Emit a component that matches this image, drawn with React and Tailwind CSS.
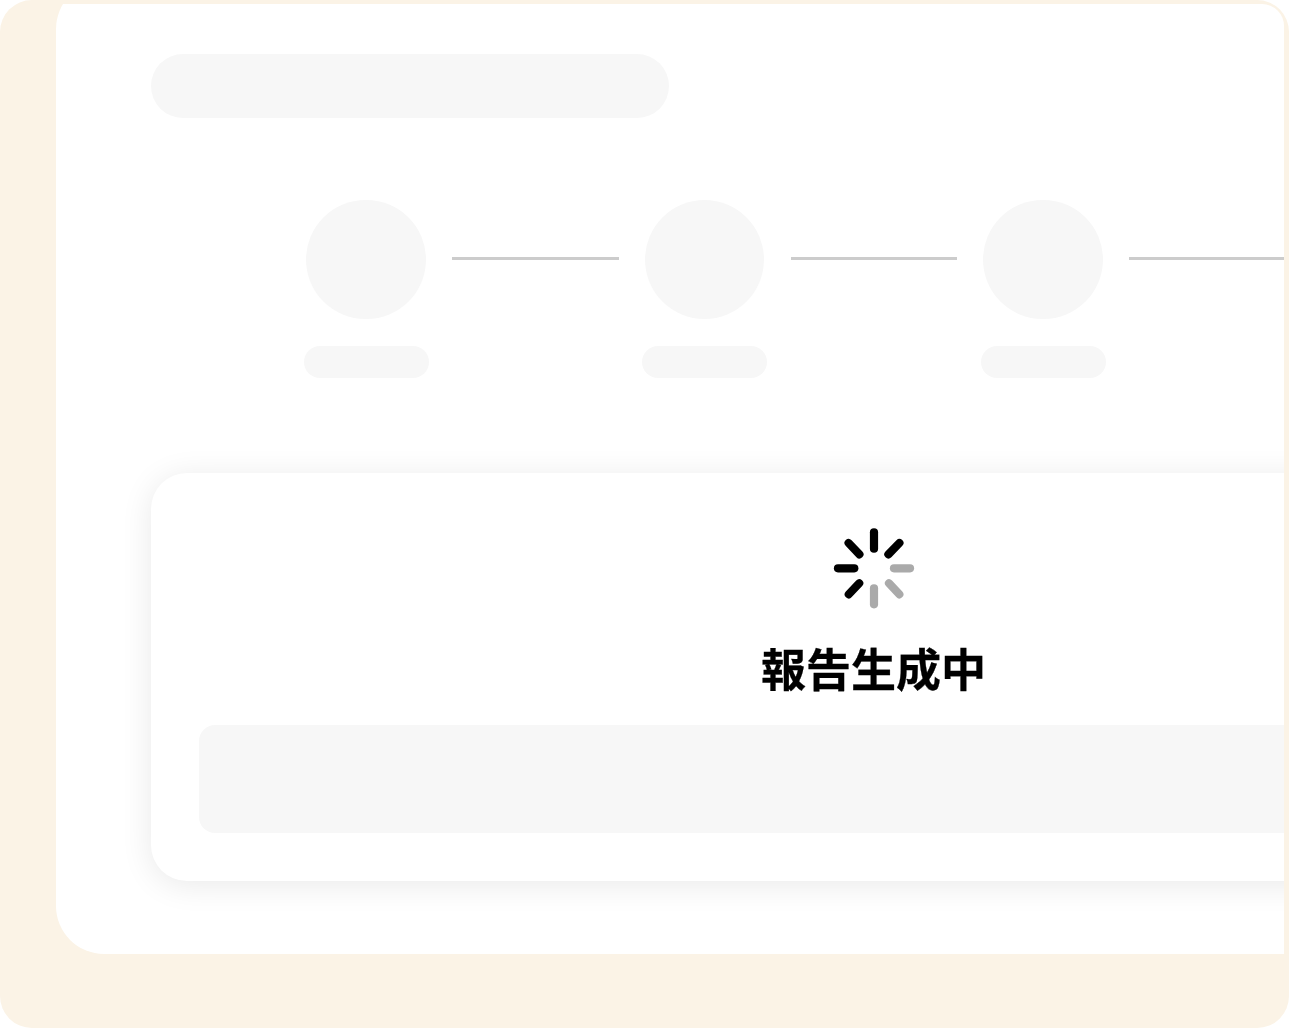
const Step = () => (
  <div className="flex w-[125px] shrink-0 flex-col items-center">
    <div className="h-[119.5px] w-[119.5px] rounded-full bg-[#f7f7f7]" />
    <div className="mt-[27px] h-[32px] w-[125px] rounded-[16px] bg-[#f7f7f7]" />
  </div>
);

const Line = () => (
  <div className="mx-[23.5px] mt-[57.5px] h-[3px] w-[166.5px] shrink-0 bg-[#cccccc]" />
);

const spokes = [
  [0, -36.7, 0, -20.3, "#000000"],
  [-25.4, -26, -14.6, -14.7, "#000000"],
  [-36, -0.7, -19.7, -0.7, "#000000"],
  [-25.2, 25.3, -14.8, 14.3, "#000000"],
  [25.4, -26, 14.4, -14.7, "#000000"],
  [36, -0.7, 20, -0.7, "#aaaaaa"],
  [25.3, 25.3, 15, 14.3, "#aaaaaa"],
  [0, 35.3, 0, 19.3, "#aaaaaa"],
];

const Spinner = () => (
  <svg width="84" height="84" viewBox="-42 -42 84 84" fill="none" className="block">
    {spokes.map(([a, b, c, d, color], i) => (
      <line key={i} x1={a} y1={b} x2={c} y2={d} stroke={color} strokeWidth="8.2" strokeLinecap="round" />
    ))}
  </svg>
);

export default function App() {
  return (
    <div className="h-[1028px] w-[1289px] overflow-hidden rounded-[32px] bg-[#fbf3e6] pt-1 pr-[5px]">
      <div className="h-[950px] overflow-hidden rounded-tr-[22px]">
        <div className="ml-14 -mt-[23px] h-[973px] w-[1636px] rounded-[48px] bg-white pt-[73px] pl-[95px]">
          <div className="h-[63.5px] w-[518px] rounded-[32px] bg-[#f7f7f7]" />
          <div className="mt-[82px] ml-[152.5px] flex items-start">
            <Step />
            <Line />
            <Step />
            <Line />
            <Step />
            <Line />
          </div>
          <div className="mt-[95px] h-[408px] w-[1446px] rounded-[36px] bg-white px-12 pt-[54px] shadow-[0_4px_32px_rgba(0,0,0,0.09)]">
            <div className="flex flex-col items-center">
              <Spinner />
              <div className="mt-[25px] text-[45px] leading-[64px] font-bold text-black will-change-transform [-webkit-text-stroke:0.3px_black] [font-family:'Noto_Sans_CJK_TC','Noto_Sans_CJK_JP',sans-serif]">
                報告生成中
              </div>
            </div>
            <div className="mt-[25px] h-[108px] rounded-[16px] bg-[#f7f7f7]" />
          </div>
        </div>
      </div>
    </div>
  );
}
